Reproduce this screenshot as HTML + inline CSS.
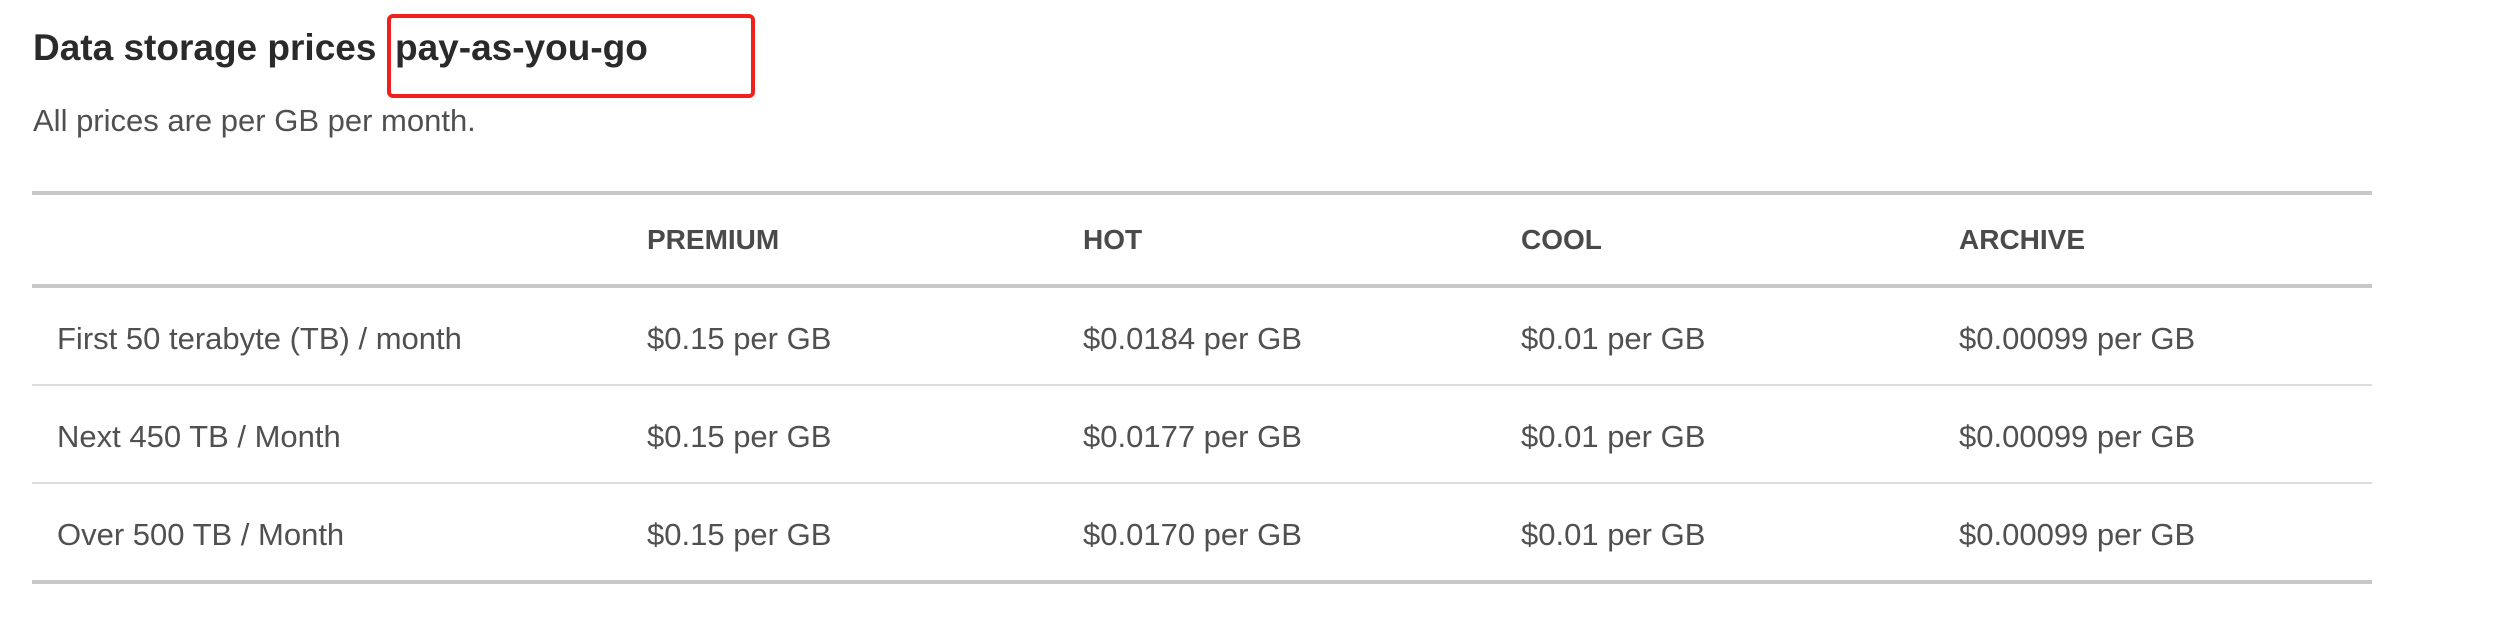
<!DOCTYPE html>
<html><head><meta charset="utf-8"><style>
html,body{margin:0;padding:0;background:#fff;width:2506px;height:622px;overflow:hidden;position:relative;font-family:"Liberation Sans",sans-serif;}
div{position:absolute;line-height:1;white-space:nowrap;}
.h{font-size:37px;font-weight:bold;color:#2a2a2a;top:29px;}
.s{font-size:31px;color:#505050;top:105px;left:33px;}
.th{font-size:28px;font-weight:bold;color:#4a4a4a;top:226px;}
.td{font-size:31px;color:#505050;}
.line{left:32px;width:2340px;}
</style></head><body>
<div class="h" style="left:33px">Data storage prices</div>
<div class="h" style="left:395px;">pay-as-you-go</div>
<div style="left:387px;top:14px;width:360px;height:76px;border:4px solid #f0201c;border-radius:6px;"></div>
<div class="s">All prices are per GB per month.</div>

<div class="line" style="top:191px;height:4px;background:#c8c8c8"></div>
<div class="th" style="left:647px">PREMIUM</div>
<div class="th" style="left:1083px">HOT</div>
<div class="th" style="left:1521px">COOL</div>
<div class="th" style="left:1959px">ARCHIVE</div>
<div class="line" style="top:284px;height:4px;background:#c8c8c8"></div>

<div class="td" style="left:57px;top:323px">First 50 terabyte (TB) / month</div>
<div class="td" style="left:647px;top:323px">$0.15 per GB</div>
<div class="td" style="left:1083px;top:323px">$0.0184 per GB</div>
<div class="td" style="left:1521px;top:323px">$0.01 per GB</div>
<div class="td" style="left:1959px;top:323px">$0.00099 per GB</div>
<div class="line" style="top:384px;height:2px;background:#dcdcdc"></div>

<div class="td" style="left:57px;top:421px">Next 450 TB / Month</div>
<div class="td" style="left:647px;top:421px">$0.15 per GB</div>
<div class="td" style="left:1083px;top:421px">$0.0177 per GB</div>
<div class="td" style="left:1521px;top:421px">$0.01 per GB</div>
<div class="td" style="left:1959px;top:421px">$0.00099 per GB</div>
<div class="line" style="top:482px;height:2px;background:#dcdcdc"></div>

<div class="td" style="left:57px;top:519px">Over 500 TB / Month</div>
<div class="td" style="left:647px;top:519px">$0.15 per GB</div>
<div class="td" style="left:1083px;top:519px">$0.0170 per GB</div>
<div class="td" style="left:1521px;top:519px">$0.01 per GB</div>
<div class="td" style="left:1959px;top:519px">$0.00099 per GB</div>
<div class="line" style="top:580px;height:4px;background:#c8c8c8"></div>
</body></html>
